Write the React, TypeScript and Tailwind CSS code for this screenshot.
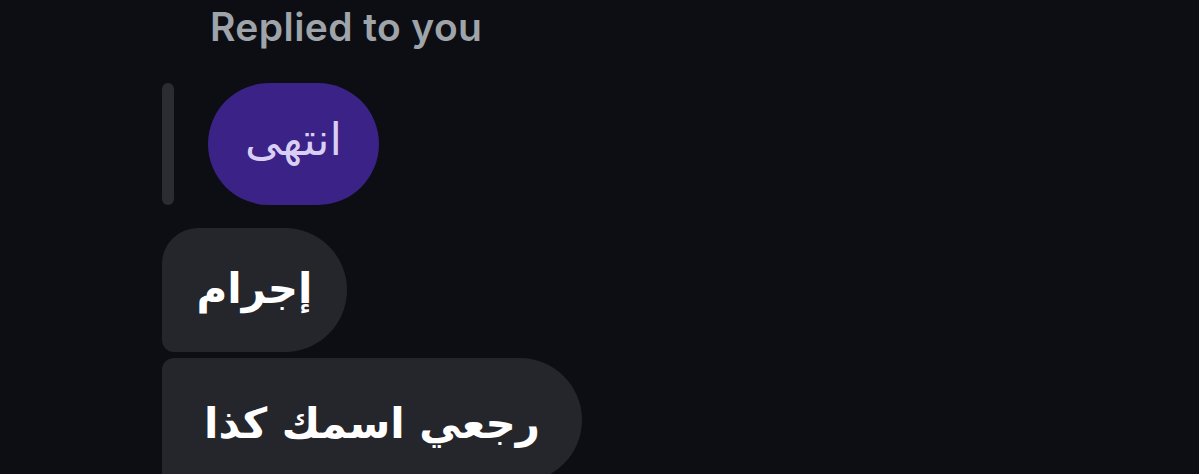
export default function App() {
  return (
    <div className="w-[1199px] h-[474px] overflow-hidden bg-[#0c0e13] relative">
      <div className="pl-[210px] pt-[4px] h-[62px]">
        <span className="text-[39px] font-semibold leading-[46px] text-[#9fa4ab] font-['Inter','Liberation_Sans',sans-serif] tracking-[0.4px]">
          Replied to you
        </span>
      </div>
      <div className="flex items-stretch gap-[34px] pl-[162px] mt-[21px] h-[122px]">
        <div className="w-[12px] rounded-full bg-[#2a2c31]" />
        <div
          dir="rtl"
          className="flex items-center justify-center w-[171px] rounded-full bg-[#3b2286] text-[#d9cef4] text-[45px] font-['DejaVu_Sans',sans-serif] pb-[8px]"
        >
          انتهى
        </div>
      </div>
      <div className="flex flex-col items-start gap-[6px] pl-[162px] mt-[23px]">
        <div
          dir="rtl"
          className="flex items-center justify-center w-[185px] h-[124px] bg-[#24262b] rounded-tl-[36px] rounded-bl-[12px] rounded-r-[62px] text-white text-[42px] font-bold font-['DejaVu_Sans',sans-serif] pb-[4px]"
        >
          إجرام
        </div>
        <div
          dir="rtl"
          className="flex items-center justify-center w-[420px] h-[124px] bg-[#24262b] rounded-tl-[12px] rounded-r-[62px] text-white text-[42px] font-bold font-['DejaVu_Sans',sans-serif] pt-[6px]"
        >
          رجعي اسمك كذا
        </div>
      </div>
    </div>
  );
}
